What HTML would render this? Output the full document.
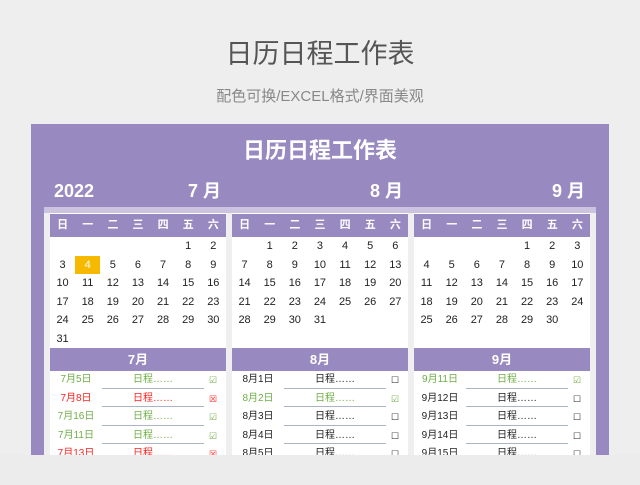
<!DOCTYPE html>
<html><head><meta charset="utf-8"><style>
*{margin:0;padding:0;box-sizing:border-box}
body{width:640px;height:485px;background:#eeeeee;position:relative;overflow:hidden;font-family:"Liberation Sans","Noto Sans CJK SC",sans-serif}
.a{position:absolute}
.t1{left:0;width:640px;top:37px;text-align:center;font-size:27px;color:#555;line-height:34px}
.t2{left:0;width:640px;top:87px;text-align:center;font-size:15px;color:#888;line-height:20px}
.panel{left:31px;top:124px;width:578px;height:331px;background:#9889c0}
.pt{left:31px;width:578px;top:137px;text-align:center;color:#fff;font-weight:bold;font-size:22px;line-height:28px}
.yr{top:180px;color:#fff;font-weight:bold;font-size:18px;line-height:22px}
.strip{left:44px;top:207px;width:552px;height:7px;background:#cbc3df}
.inner{left:44px;top:213px;width:552px;height:242px;background:#efefef}
.m{top:213px;width:176px;height:242px;background:#fff}
.wh{position:absolute;left:0;top:1px;width:176px;height:23px;background:#9889c0;display:flex}
.wh span{flex:1;color:#fff;text-align:center;font-size:11px;line-height:23px;font-weight:bold}
.g{position:absolute;left:0;top:237px}
.r{display:flex;height:18.6px}
.r span{width:25.14px;text-align:center;font-size:11px;line-height:18.6px;color:#222}
.r span.h{background:#f7b900;color:#fff}
.mb{position:absolute;left:0;top:135px;width:176px;height:23px;background:#9889c0;color:#fff;font-weight:bold;font-size:13px;text-align:center;line-height:23px}
.s{position:absolute;left:0;width:176px;height:18.6px;font-size:10px;line-height:18.6px}
.s .d{position:absolute;left:0;width:52px;text-align:center}
.s .x{position:absolute;left:52px;width:102px;text-align:center;border-bottom:1.5px solid #a9b4c6;height:17.6px}
.s .c{position:absolute;left:154px;width:18px;text-align:center;font-size:9px}
.gr{color:#70ad47}.rd{color:#ff2020}.bk{color:#222}
</style></head><body>
<div class="a t1">日历日程工作表</div>
<div class="a t2">配色可换/EXCEL格式/界面美观</div>
<div class="a panel"></div>
<div class="a pt">日历日程工作表</div>
<div class="a yr" style="left:54px">2022</div>
<div class="a yr" style="left:188px">7 月</div>
<div class="a yr" style="left:370px">8 月</div>
<div class="a yr" style="left:552px">9 月</div>
<div class="a strip"></div>
<div class="a inner"></div>

<div class="a m" style="left:50px">
<div class="wh"><span>日</span><span>一</span><span>二</span><span>三</span><span>四</span><span>五</span><span>六</span></div>
<div class="g" style="top:24px">
<div class="r"><span></span><span></span><span></span><span></span><span></span><span>1</span><span>2</span></div>
<div class="r"><span>3</span><span class="h">4</span><span>5</span><span>6</span><span>7</span><span>8</span><span>9</span></div>
<div class="r"><span>10</span><span>11</span><span>12</span><span>13</span><span>14</span><span>15</span><span>16</span></div>
<div class="r"><span>17</span><span>18</span><span>19</span><span>20</span><span>21</span><span>22</span><span>23</span></div>
<div class="r"><span>24</span><span>25</span><span>26</span><span>27</span><span>28</span><span>29</span><span>30</span></div>
<div class="r"><span>31</span><span></span><span></span><span></span><span></span><span></span><span></span></div>
</div>
<div class="mb">7月</div>
<div class="s gr" style="top:158px"><span class="d">7月5日</span><span class="x">日程……</span><span class="c">☑</span></div>
<div class="s rd" style="top:176.6px"><span class="d">7月8日</span><span class="x">日程……</span><span class="c">☒</span></div>
<div class="s gr" style="top:195.2px"><span class="d">7月16日</span><span class="x">日程……</span><span class="c">☑</span></div>
<div class="s gr" style="top:213.8px"><span class="d">7月11日</span><span class="x">日程……</span><span class="c">☑</span></div>
<div class="s rd" style="top:232.4px"><span class="d">7月13日</span><span class="x">日程……</span><span class="c">☒</span></div>
</div>

<div class="a m" style="left:232px">
<div class="wh"><span>日</span><span>一</span><span>二</span><span>三</span><span>四</span><span>五</span><span>六</span></div>
<div class="g" style="top:24px">
<div class="r"><span></span><span>1</span><span>2</span><span>3</span><span>4</span><span>5</span><span>6</span></div>
<div class="r"><span>7</span><span>8</span><span>9</span><span>10</span><span>11</span><span>12</span><span>13</span></div>
<div class="r"><span>14</span><span>15</span><span>16</span><span>17</span><span>18</span><span>19</span><span>20</span></div>
<div class="r"><span>21</span><span>22</span><span>23</span><span>24</span><span>25</span><span>26</span><span>27</span></div>
<div class="r"><span>28</span><span>29</span><span>30</span><span>31</span><span></span><span></span><span></span></div>
</div>
<div class="mb">8月</div>
<div class="s bk" style="top:158px"><span class="d">8月1日</span><span class="x">日程……</span><span class="c">☐</span></div>
<div class="s gr" style="top:176.6px"><span class="d">8月2日</span><span class="x">日程……</span><span class="c">☑</span></div>
<div class="s bk" style="top:195.2px"><span class="d">8月3日</span><span class="x">日程……</span><span class="c">☐</span></div>
<div class="s bk" style="top:213.8px"><span class="d">8月4日</span><span class="x">日程……</span><span class="c">☐</span></div>
<div class="s bk" style="top:232.4px"><span class="d">8月5日</span><span class="x">日程……</span><span class="c">☐</span></div>
</div>

<div class="a m" style="left:414px">
<div class="wh"><span>日</span><span>一</span><span>二</span><span>三</span><span>四</span><span>五</span><span>六</span></div>
<div class="g" style="top:24px">
<div class="r"><span></span><span></span><span></span><span></span><span>1</span><span>2</span><span>3</span></div>
<div class="r"><span>4</span><span>5</span><span>6</span><span>7</span><span>8</span><span>9</span><span>10</span></div>
<div class="r"><span>11</span><span>12</span><span>13</span><span>14</span><span>15</span><span>16</span><span>17</span></div>
<div class="r"><span>18</span><span>19</span><span>20</span><span>21</span><span>22</span><span>23</span><span>24</span></div>
<div class="r"><span>25</span><span>26</span><span>27</span><span>28</span><span>29</span><span>30</span><span></span></div>
</div>
<div class="mb">9月</div>
<div class="s gr" style="top:158px"><span class="d">9月11日</span><span class="x">日程……</span><span class="c">☑</span></div>
<div class="s bk" style="top:176.6px"><span class="d">9月12日</span><span class="x">日程……</span><span class="c">☐</span></div>
<div class="s bk" style="top:195.2px"><span class="d">9月13日</span><span class="x">日程……</span><span class="c">☐</span></div>
<div class="s bk" style="top:213.8px"><span class="d">9月14日</span><span class="x">日程……</span><span class="c">☐</span></div>
<div class="s bk" style="top:232.4px"><span class="d">9月15日</span><span class="x">日程……</span><span class="c">☐</span></div>
</div>
<div class="a" style="left:0;top:455px;width:640px;height:30px;background:#ececec"></div>
</body></html>
